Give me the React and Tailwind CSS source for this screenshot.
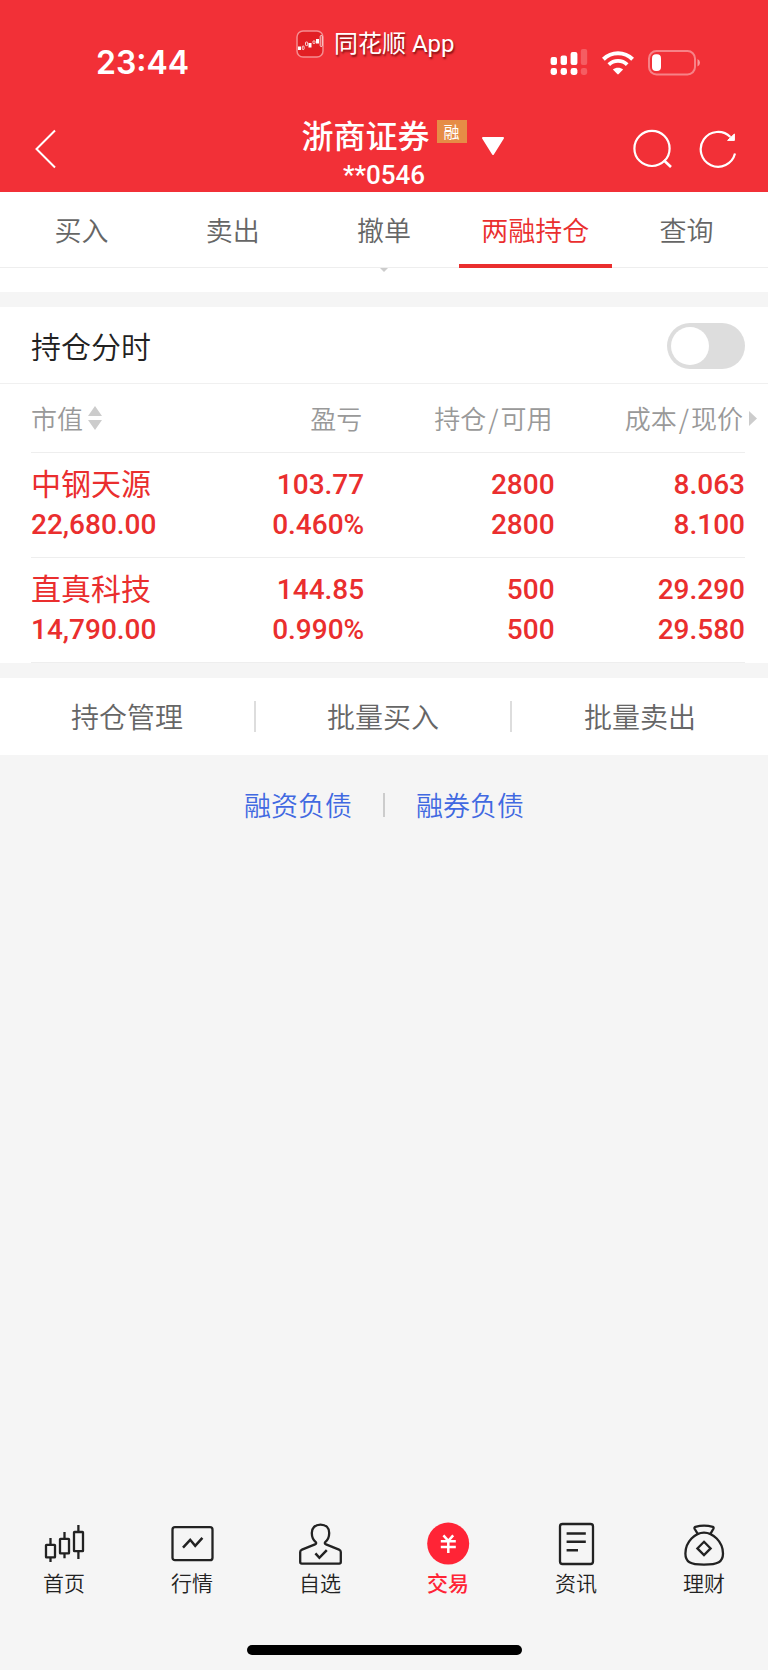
import React, { useState } from "react";

const tabs = ["买入", "卖出", "撤单", "两融持仓", "查询"];

const holdings = [
  { name: "中钢天源", value: "22,680.00", cells: [["103.77", "0.460%"], ["2800", "2800"], ["8.063", "8.100"]] },
  { name: "直真科技", value: "14,790.00", cells: [["144.85", "0.990%"], ["500", "500"], ["29.290", "29.580"]] },
];

function AppLogo() {
  return (
    <svg width="28" height="28" viewBox="0 0 28 28" fill="none" aria-hidden="true">
      <rect x="1" y="1" width="26" height="26" rx="6" fill="#e21f24" stroke="#f58d90" strokeWidth="1.5" />
      <g fill="#fff">
        <rect x="2" y="16.5" width="3" height="3.5" />
        <rect x="12.5" y="13" width="3" height="4.5" />
        <rect x="20" y="9" width="3" height="4.5" />
      </g>
      <g stroke="#fff" strokeWidth="0.8">
        <rect x="6.3" y="16" width="1.8" height="3.6" rx="0.8" />
        <rect x="9.5" y="12" width="2.2" height="3.6" rx="0.8" />
        <rect x="17" y="10.8" width="2" height="2.8" rx="0.8" />
        <rect x="24.2" y="5.5" width="2" height="11" rx="1" />
      </g>
    </svg>
  );
}

function Signal() {
  return (
    <svg width="38" height="27" viewBox="0 0 38 27" fill="#fff" aria-hidden="true">
      <rect x="0.6" y="8" width="6.4" height="8" rx="2" />
      <rect x="10.6" y="6.4" width="6.4" height="9.6" rx="2" />
      <rect x="20.6" y="3" width="6.8" height="13" rx="2" />
      <rect x="30.8" y="0" width="6.4" height="16" rx="2" opacity="0.22" />
      <rect x="0.6" y="19" width="6.4" height="7" rx="2.4" />
      <rect x="10.6" y="19" width="6.4" height="7" rx="2.4" />
      <rect x="20.6" y="19" width="6.8" height="7" rx="2.4" />
      <rect x="30.8" y="19" width="6.4" height="7" rx="2.4" opacity="0.22" />
    </svg>
  );
}

function Wifi() {
  return (
    <svg width="32" height="24" viewBox="0 0 32 24" fill="none" aria-hidden="true">
      <path d="M1.4 8.2C9.6 0.2 22.4 0.2 30.6 8.2" stroke="#fff" strokeWidth="4" />
      <path d="M6.8 13.6C12 8.6 20 8.6 25.2 13.6" stroke="#fff" strokeWidth="3.8" />
      <path d="M10.9 18.6C13.6 16 18.4 16 21.1 18.6L16.7 23.1Q16 23.7 15.3 23.1Z" fill="#fff" />
    </svg>
  );
}

function Battery() {
  return (
    <svg width="53" height="26" viewBox="0 0 53 26" fill="none" aria-hidden="true">
      <rect x="1" y="1" width="46" height="23.4" rx="7.5" stroke="#fff" strokeOpacity="0.4" strokeWidth="2" />
      <path d="M49.5 9V16.4Q52 15 52 12.7T49.5 9Z" fill="#fff" fillOpacity="0.5" />
      <rect x="4" y="4.3" width="9" height="16.6" rx="4" fill="#fff" />
    </svg>
  );
}

function Icon({ children }) {
  return (
    <svg width="44" height="44" viewBox="0 0 44 44" fill="none" stroke="currentColor" strokeWidth="2.3" aria-hidden="true">
      {children}
    </svg>
  );
}

const navItems = [
  {
    label: "首页",
    icon: (
      <Icon>
        <rect x="4" y="22.8" width="9" height="12.6" rx="0.5" />
        <path d="M8.5 16V22.8M8.5 35.4V40M22.5 10V16.8M22.5 31.4V36.2M36.4 3V10M36.4 29.2V37" />
        <rect x="18" y="16.8" width="9" height="14.6" rx="0.5" />
        <rect x="32" y="10" width="9" height="19.2" rx="0.5" />
      </Icon>
    ),
  },
  {
    label: "行情",
    icon: (
      <Icon>
        <rect x="2.5" y="5.2" width="40" height="33" rx="2.5" />
        <path d="M13 25.6L20.2 17.8L25.2 23.8L32.4 15.8" strokeWidth="2.5" />
      </Icon>
    ),
  },
  {
    label: "自选",
    icon: (
      <Icon>
        <path d="M18 20.4C14.8 17.8 13.8 15 13.8 11C13.8 6 17 2.6 22.5 2.6S31.2 6 31.2 11C31.2 15 30.2 17.8 27 20.4C26.6 21.4 27 22 28 22.4L41 27.6Q42.8 28.4 42.8 30V40Q42.8 41.6 41.2 41.6H3.8Q2.2 41.6 2.2 40V30Q2.2 28.4 4 27.6L17 22.4C18 22 18.4 21.4 18 20.4Z" />
        <path d="M17.4 31.4L21.4 35.8L28.8 28.2" strokeWidth="2.5" />
      </Icon>
    ),
  },
  {
    label: "交易",
    active: true,
    icon: (
      <Icon>
        <circle cx="22.2" cy="21.6" r="21" fill="currentColor" stroke="none" />
        <path d="M17.4 13.4L22.3 18.8L27.2 13.4M14.8 19.2H29.8M14.8 25H29.8M22.3 18.6V31" stroke="#fff" strokeWidth="2.5" />
      </Icon>
    ),
  },
  {
    label: "资讯",
    icon: (
      <Icon>
        <rect x="6" y="2" width="33" height="40" rx="2.5" />
        <path d="M12.6 11.4H31.8M12.6 19.8H31.8M12.6 28.2H24" strokeWidth="2.5" />
      </Icon>
    ),
  },
  {
    label: "理财",
    icon: (
      <Icon>
        <path d="M16.2 12.6L12.6 6.8Q12 5.4 13.4 4.9Q22 2.4 30.8 4.9Q32 5.4 31.4 6.8L28 12.6" />
        <path d="M22 10.6C30.5 10.6 41 19.5 41 31.5C41 40 36 42.6 22 42.6S3.4 40 3.4 31.5C3.4 19.5 13.5 10.6 22 10.6Z" />
        <path d="M22 19.8L28.6 26.4L22 33L15.4 26.4Z" />
      </Icon>
    ),
  },
];

export default function App() {
  const [tab, setTab] = useState("两融持仓");
  const [intraday, setIntraday] = useState(false);

  return (
    <div className="flex min-h-screen flex-col bg-[#f5f5f5] font-['Noto_Sans_CJK_SC',sans-serif] text-[#222]">
      <header className="bg-[#f23037] text-white">
        <div className="grid h-[96px] grid-cols-3">
          <div className="flex items-center pt-[30px] pl-24 font-['Inter',sans-serif] text-[32px] leading-10 font-semibold">
            23:44
          </div>
          <div className="flex items-center gap-[10px] pb-2 pl-10 font-['Roboto','Noto_Sans_CJK_SC',sans-serif] text-[24px] leading-8 whitespace-nowrap [text-shadow:1px_2px_2px_rgba(80,0,0,0.7)]">
            <AppLogo />
            <span>同花顺 App</span>
          </div>
          <div className="flex items-center justify-end gap-[14px] pt-[29px] pr-[67px]">
            <Signal />
            <Wifi />
            <Battery />
          </div>
        </div>

        <div className="flex h-[96px] items-center">
          <div className="flex-1 pt-[10px] pr-[11px] pl-[34px]">
            <button type="button" aria-label="返回" className="block">
              <svg width="24" height="40" viewBox="0 0 24 40" fill="none" stroke="#fff" strokeWidth="2">
                <path d="M21 1.5L2.5 20L21 38.5" />
              </svg>
            </button>
          </div>
          <div className="flex flex-col items-center gap-[3px] pt-[19px]">
            <h1 className="flex items-center gap-[7px] text-[32px] leading-10 font-medium">
              浙商证券
              <span className="mb-[5px] bg-[#e68c46] px-[7px] text-[16px] leading-[23px] font-normal">融</span>
            </h1>
            <p className="font-['Roboto',sans-serif] text-[26px] leading-9 font-medium">**0546</p>
          </div>
          <div className="flex flex-1 items-center pt-[10px] pr-[31px] pl-[14px]">
            <button type="button" aria-label="切换账户" className="mr-auto mb-[6px]">
              <svg width="24" height="20" viewBox="0 0 24 20" fill="#fff" stroke="#fff" strokeWidth="2" strokeLinejoin="round">
                <path d="M2 2H22L12 18Z" />
              </svg>
            </button>
            <button type="button" aria-label="搜索" className="mr-[26px]">
              <svg width="40" height="40" viewBox="0 0 40 40" fill="none" stroke="#fff" strokeWidth="2.2">
                <circle cx="19" cy="19.4" r="17.6" />
                <path d="M30.8 31.2L38 38" strokeWidth="2.6" />
              </svg>
            </button>
            <button type="button" aria-label="刷新">
              <svg width="38" height="40" viewBox="0 0 38 40" fill="none" stroke="#fff" strokeWidth="2.2">
                <path d="M36 24.6A17.4 17.4 0 1 1 31.4 8" />
                <path d="M35.4 5V11.4H28.6Z" fill="#fff" strokeWidth="1" />
              </svg>
            </button>
          </div>
        </div>
      </header>

      <nav aria-label="交易菜单" className="flex h-[76px] border-b border-[#eee] bg-white px-[6px]">
        {tabs.map((t) => (
          <button
            key={t}
            type="button"
            onClick={() => setTab(t)}
            className={
              t === tab
                ? "relative flex-1 pt-px text-[27px] leading-10 font-[350] text-[#ea2e2e] after:absolute after:-inset-x-px after:-bottom-px after:h-1 after:bg-[#ea2e2e]"
                : "flex-1 pt-px text-[27px] leading-10 font-[350] text-[#666]"
            }
          >
            {t}
          </button>
        ))}
      </nav>

      <div className="flex h-6 justify-center bg-white">
        <svg width="8" height="4" viewBox="0 0 8 4" fill="#ccc" aria-hidden="true">
          <path d="M0 0H8L4 4Z" />
        </svg>
      </div>

      <main className="mt-[15px]">
        <div className="flex h-[77px] items-center justify-between border-b border-[#f0f0f0] bg-white pt-px pr-[23px] pl-[31px]">
          <label htmlFor="intraday" className="pb-[2px] text-[30px] leading-10 font-[350] text-[#222]">
            持仓分时
          </label>
          <input
            id="intraday"
            type="checkbox"
            role="switch"
            checked={intraday}
            onChange={(e) => setIntraday(e.target.checked)}
            className="h-[46px] w-[78px] appearance-none rounded-full bg-[#ddd] p-1 before:block before:size-[38px] before:rounded-full before:bg-white checked:bg-[#ea2e2e] checked:before:ml-8"
          />
        </div>

        <div className="bg-white pr-[23px] pl-[31px]">
          <table className="w-full table-fixed border-collapse">
            <colgroup>
              <col className="w-[20%]" />
              <col />
              <col />
              <col />
            </colgroup>
            <thead>
              <tr className="h-[68px] border-b border-[#eee] text-right text-[26px] leading-10 text-[#999] [&>th]:pr-[2px] [&>th]:font-[350]">
                <th scope="col" className="text-left">
                  <button type="button" className="flex items-center gap-[5px]">
                    市值
                    <svg width="14" height="26" viewBox="0 0 14 26" fill="#ccc" aria-hidden="true">
                      <path d="M7 1L14 11H0ZM7 25L14 15H0Z" />
                    </svg>
                  </button>
                </th>
                <th scope="col">盈亏</th>
                <th scope="col">持仓<span className="mx-[2px]">/</span>可用</th>
                <th scope="col" className="relative">
                  成本<span className="mx-[2px]">/</span>现价
                  <svg className="absolute top-[27px] -right-3" width="8" height="15" viewBox="0 0 8 15" fill="#ccc" aria-hidden="true">
                    <path d="M0 0L8 7.5L0 15Z" />
                  </svg>
                </th>
              </tr>
            </thead>
            <tbody className="font-['Roboto','Noto_Sans_CJK_SC',sans-serif] text-[28px] leading-10 text-[#ea2e2e]">
              {holdings.map((h) => (
                <tr key={h.name} className="border-b border-[#eee]">
                  <th scope="row" className="py-3 text-left">
                    <div className="text-[30px] font-normal whitespace-nowrap">{h.name}</div>
                    <div className="font-medium">{h.value}</div>
                  </th>
                  {h.cells.map(([a, b], i) => (
                    <td key={i} className="py-3 text-right font-medium">
                      <div>{a}</div>
                      <div>{b}</div>
                    </td>
                  ))}
                </tr>
              ))}
            </tbody>
          </table>
        </div>

        <div className="mt-[15px] grid h-[77px] grid-cols-3 items-center divide-x-2 divide-[#ddd] bg-white text-[28px] leading-[31px] font-[350] text-[#666]">
          <button type="button">持仓管理</button>
          <button type="button">批量买入</button>
          <button type="button">批量卖出</button>
        </div>

        <div className="mt-[30px] flex items-center justify-center gap-[31px] text-[27px] leading-10 font-[350] text-[#4169e1]">
          <a href="#financing">融资负债</a>
          <span className="h-6 w-[2px] bg-[#ccc]" />
          <a href="#lending">融券负债</a>
        </div>
      </main>

      <footer className="mt-auto">
        <nav aria-label="主导航" className="grid grid-cols-6">
          {navItems.map((n) => (
            <a
              key={n.label}
              href={"#" + n.label}
              className={
                n.active
                  ? "flex flex-col items-center gap-1 text-[21px] leading-6 font-medium text-[#ff2436]"
                  : "flex flex-col items-center gap-1 text-[21px] leading-6 font-[350] text-[#222]"
              }
            >
              {n.icon}
              <span>{n.label}</span>
            </a>
          ))}
        </nav>
        <div className="mx-auto mt-[51px] mb-[15px] h-[10px] w-[275px] rounded-full bg-black" />
      </footer>
    </div>
  );
}
